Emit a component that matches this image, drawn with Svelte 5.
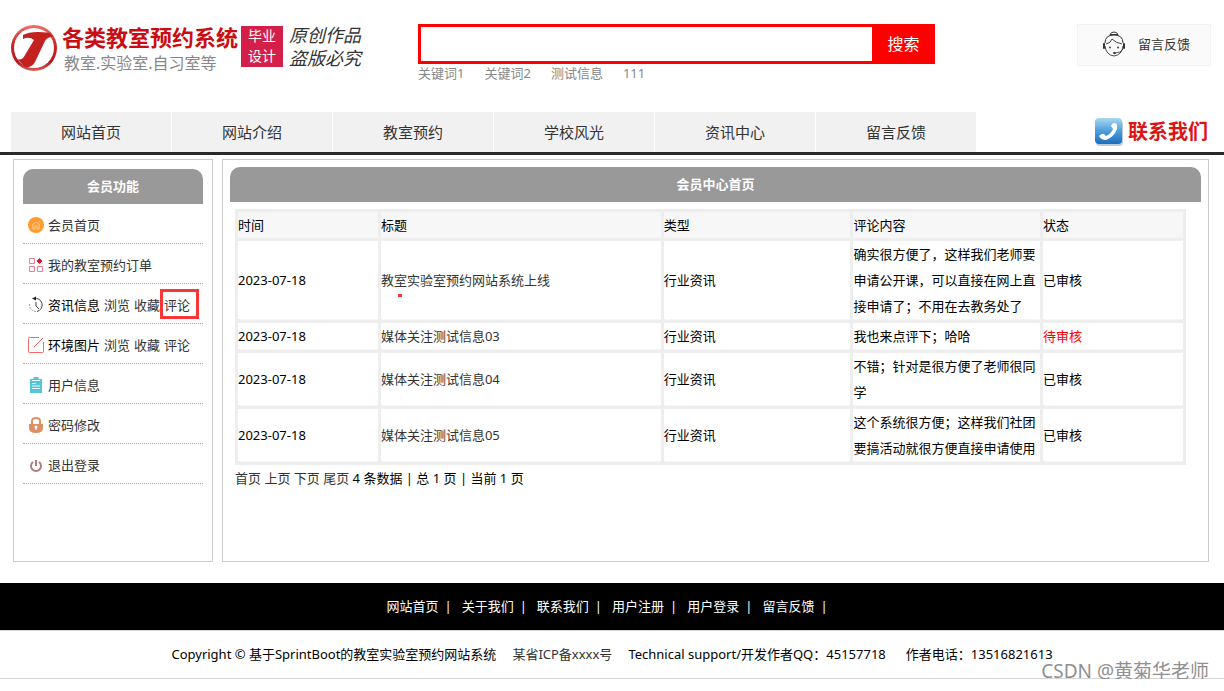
<script lang="ts">
	type Comment = { date: string; title: string; type: string; content: string; status: string; pending?: boolean };

	const keywords = ['关键词1', '关键词2', '测试信息', '111'];
	const navItems = ['网站首页', '网站介绍', '教室预约', '学校风光', '资讯中心', '留言反馈'];
	const footerLinks = ['网站首页', '关于我们', '联系我们', '用户注册', '用户登录', '留言反馈'];
	const subLinks = ['浏览', '收藏', '评论'];

	const menu = [
		{ icon: 'home', label: '会员首页' },
		{ icon: 'grid', label: '我的教室预约订单' },
		{ icon: 'clock', label: '资讯信息', links: subLinks, marked: '评论' },
		{ icon: 'edit', label: '环境图片', links: subLinks },
		{ icon: 'board', label: '用户信息' },
		{ icon: 'lock', label: '密码修改' },
		{ icon: 'power', label: '退出登录' }
	];

	const columns = ['时间', '标题', '类型', '评论内容', '状态'];
	const comments: Comment[] = [
		{
			date: '2023-07-18',
			title: '教室实验室预约网站系统上线',
			type: '行业资讯',
			content: '确实很方便了，这样我们老师要申请公开课，可以直接在网上直接申请了；不用在去教务处了',
			status: '已审核'
		},
		{ date: '2023-07-18', title: '媒体关注测试信息03', type: '行业资讯', content: '我也来点评下；哈哈', status: '待审核', pending: true },
		{ date: '2023-07-18', title: '媒体关注测试信息04', type: '行业资讯', content: '不错；针对是很方便了老师很同学', status: '已审核' },
		{
			date: '2023-07-18',
			title: '媒体关注测试信息05',
			type: '行业资讯',
			content: '这个系统很方便；这样我们社团要搞活动就很方便直接申请使用',
			status: '已审核'
		}
	];

	let query = $state('');
</script>

<div class="page" lang="zh-CN">
	<header class="header">
		<a class="logo" href="#home">
			<svg class="logo-mark" viewBox="0 0 48 48" aria-hidden="true">
				<defs>
					<linearGradient id="ring" x1="0" y1="0" x2="0" y2="1">
						<stop offset="0" stop-color="#ee7069" />
						<stop offset="0.4" stop-color="#c92a26" />
						<stop offset="0.8" stop-color="#b51618" />
						<stop offset="1" stop-color="#d9605c" />
					</linearGradient>
				</defs>
				<circle cx="24" cy="24" r="23" fill="url(#ring)" />
				<circle cx="24" cy="24" r="20" fill="#fff" />
				<path d="M13 11 Q22 6 40 9 L43 13 Q37 13 35 17 L25 38 Q22 44 15 43 L7 35 Q12 37 15 31 L24 16 Q19 12 13 15Z" fill="#c3211f" />
			</svg>
			<span class="logo-text">
				<strong>各类教室预约系统</strong>
				<span class="subtitle">教室.实验室.自习室等</span>
			</span>
			<span class="stamp">毕业<br />设计</span>
			<span class="slogan">
				<span>原创作品</span>
				<span>盗版必究</span>
			</span>
		</a>

		<div class="search">
			<form class="search-form" onsubmit={(e) => e.preventDefault()}>
				<input type="text" aria-label="搜索" bind:value={query} />
				<button type="submit">搜索</button>
			</form>
			<div class="keywords">
				{#each keywords as word}
					<a href="#search">{word}</a>
				{/each}
			</div>
		</div>

		<a class="feedback" href="#feedback">
			<svg viewBox="0 0 24 26" fill="none" stroke="#333" aria-hidden="true">
				<path d="M8 3.500 Q9 1 12 1 Q15 1 16 3.500 M8 3.500h8" />
				<path d="M3 12 Q3 4 12 4 Q21 4 21 12" />
				<path d="M3 15 Q4 24 12 25 Q20 24 21 15" stroke-width="0.900" />
				<path d="M4 13 Q9 12 10 8 Q14 12 20 13" stroke-width="0.900" />
				<path d="M2 13v4M22 13v4" stroke-width="2" stroke-linecap="round" />
				<path d="M21 18 Q19 22 13 22" stroke-width="0.800" />
				<circle cx="8" cy="16.500" r="0.900" fill="#333" stroke="none" />
				<circle cx="16" cy="16.500" r="0.900" fill="#333" stroke="none" />
				<ellipse cx="12.500" cy="22" rx="1.500" ry="0.900" fill="#333" stroke="none" />
			</svg>
			留言反馈
		</a>
	</header>

	<nav class="nav">
		{#each navItems as item}
			<a class="nav-item" href="#nav">{item}</a>
		{/each}
		<a class="contact" href="#contact">
			<svg viewBox="0 0 30 30" aria-hidden="true">
				<defs>
					<linearGradient id="phone" x1="0" y1="0" x2="0" y2="1">
						<stop offset="0" stop-color="#a9d8f2" />
						<stop offset="0.5" stop-color="#4d9edb" />
						<stop offset="1" stop-color="#1c6dbd" />
					</linearGradient>
				</defs>
				<rect x="2" y="3" width="27" height="26" rx="4" fill="#b9cbdd" />
				<rect x="1" y="1" width="27" height="26" rx="4" fill="url(#phone)" />
				<path d="M5 19 Q8 16 10 17 L12 19 Q17 17 19 12 L17 9 Q18 6 21 6 Q24 7 23 12 Q20 20 12 23 Q7 23 5 19Z" fill="#fff" />
			</svg>
			联系我们
		</a>
	</nav>

	<div class="body">
		<aside class="sidebar">
			<h2>会员功能</h2>
			<ul>
				{#each menu as item}
					<li>
						<svg class="icon" viewBox="0 0 16 16" fill="none" aria-hidden="true">
							{#if item.icon === 'home'}
								<circle cx="8" cy="8" r="8" fill="#ff9c2f" />
								<path d="M4 8l4-3 4 3M5 8v4h2v-3h2v3h2V8M11 4v2" stroke="#ffd09a" stroke-width="0.800" />
							{:else if item.icon === 'grid'}
								<path d="M1.500 1.500h5v5h-5zM1.500 9.500h5v5h-5zM9.500 9.500h5v5h-5z" stroke="#f07a8a" />
								<path d="M11.500 1.500l2.500 2.500-2.500 2.500-2.500-2.500z" fill="#e8132e" stroke="#e8132e" stroke-linejoin="round" />
							{:else if item.icon === 'clock'}
								<path d="M6 1.500 A6.500 6.500 0 0 1 9 14.500M8 5v4l3 3" stroke="#444" />
								<path d="M1.500 7 A7 7 0 0 0 9 14.500" stroke="#999" stroke-dasharray="2 1" />
								<path d="M4 1.500l4-2v4z" fill="#222" />
							{:else if item.icon === 'edit'}
								<path d="M11 0.500H1.500a1 1 0 0 0-1 1v13a1 1 0 0 0 1 1h13a1 1 0 0 0 1-1V5M6 10l9-9" stroke="#f4696b" />
							{:else if item.icon === 'board'}
								<path d="M2 2h3l1-2h4l1 2h3v14H2z" fill="#58c5d6" />
								<path d="M4 3.500h8M4 6.500h4M4 9h8M4 11.500h8" stroke="#e4f8fb" />
							{:else if item.icon === 'lock'}
								<path d="M4 8V4q0-3 4-3t4 3v4" stroke="#dc9063" stroke-width="2" />
								<path d="M1 7h14v4q0 5-7 5t-7-5z" fill="#dc9063" />
								<circle cx="8" cy="10" r="1.500" fill="#fff" />
								<path d="M8 10v3" stroke="#fff" />
							{:else}
								<path d="M5 5a5 5 0 1 0 6 0M8 3v6" stroke="#b27b7c" stroke-width="2" />
							{/if}
						</svg>
						{#if item.links}
							<span>{item.label}</span>
							{#each item.links as link}
								<a href="#member" class:marked={item.marked === link}>{link}</a>
							{/each}
						{:else}
							<a href="#member">{item.label}</a>
						{/if}
					</li>
				{/each}
			</ul>
		</aside>

		<main class="main">
			<h1>会员中心首页</h1>
			<div class="content">
				<table>
					<colgroup>
						<col class="narrow" />
						<col class="wide" />
						<col class="medium" />
						<col class="medium" />
						<col class="narrow" />
					</colgroup>
					<thead>
						<tr>
							{#each columns as column}
								<th scope="col">{column}</th>
							{/each}
						</tr>
					</thead>
					<tbody>
						{#each comments as row, i}
							<tr>
								<td>{row.date}</td>
								<td><a href="#news" class:dot={i === 0}>{row.title}</a></td>
								<td>{row.type}</td>
								<td>{row.content}</td>
								<td class:pending={row.pending}>{row.status}</td>
							</tr>
						{/each}
					</tbody>
				</table>
				<div class="pager">
					<a href="#first">首页</a> <a href="#prev">上页</a> <a href="#next">下页</a> <a href="#last">尾页</a>
					4 条数据 | 总 1 页 | 当前 1 页
				</div>
			</div>
		</main>
	</div>

	<footer>
		<div class="footer-nav">
			{#each footerLinks as link}
				<span><a href="#footer">{link}</a>|</span>
			{/each}
		</div>
		<div class="copyright">
			<span>Copyright © 基于SprintBoot的教室实验室预约网站系统</span>
			<a href="#icp">某省ICP备xxxx号</a>
			<span>Technical support/开发作者QQ：45157718</span>
			<span class="phone">作者电话：13516821613</span>
		</div>
		<div class="watermark">CSDN @黄菊华老师</div>
	</footer>
</div>

<style>
	:global(body) {
		margin: 0;
		background: #fff;
	}
	.page {
		font-family: 'Noto Sans', 'Noto Sans CJK SC', sans-serif;
		font-size: 13px;
		line-height: 26px;
		color: #000;
	}
	a {
		color: #333;
		text-decoration: none;
	}
	.header {
		display: flex;
		align-items: flex-start;
		height: 88px;
		padding: 24px 13px 0 10px;
	}
	.logo {
		display: flex;
		flex: none;
		width: 408px;
	}
	.logo-mark {
		width: 48px;
		height: 48px;
	}
	.logo-text {
		display: flex;
		flex-direction: column;
		margin: 0 3px 0 4px;
		font-size: 16px;
		color: #888;
	}
	.logo-text strong {
		font-size: 22px;
		color: #c90d12;
	}
	.subtitle {
		padding-left: 2px;
	}
	.stamp {
		box-sizing: border-box;
		width: 42px;
		height: 41px;
		margin-top: 2px;
		font-size: 14px;
		line-height: 20px;
		text-align: center;
		color: #fff;
		background: #d41f48;
	}
	.slogan {
		display: flex;
		flex-direction: column;
		margin-left: 6px;
		font-size: 18px;
		font-style: italic;
		line-height: 23px;
		color: #333;
	}
	.search {
		flex: 0 1 517px;
	}
	.search-form {
		display: flex;
		height: 40px;
	}
	.search-form input {
		flex: 1;
		min-width: 0;
		padding: 0 8px;
		font: inherit;
		border: 3px solid #f00;
		border-right: 0;
		outline: none;
	}
	.search-form button {
		width: 63px;
		padding: 0;
		font: inherit;
		font-size: 16px;
		color: #fff;
		background: #f00;
		border: 0;
	}
	.keywords {
		display: flex;
		gap: 20px;
		line-height: 18px;
	}
	.keywords a {
		color: #888;
	}
	.feedback {
		display: flex;
		align-items: center;
		gap: 12px;
		box-sizing: border-box;
		width: 134px;
		height: 42px;
		margin-left: auto;
		padding: 0 0 2px 24px;
		background: #fafafa;
		border: 1px solid #f2f2f2;
	}
	.feedback svg {
		width: 24px;
		height: 26px;
	}
	.nav {
		display: flex;
		padding: 0 16px 0 11px;
		border-bottom: 3px solid #29292b;
	}
	.nav-item {
		width: 160px;
		margin-right: 1px;
		font-size: 15px;
		line-height: 40px;
		text-align: center;
		background: #f1f1f1;
	}
	.contact {
		display: flex;
		align-items: center;
		gap: 4px;
		margin-left: auto;
		font-size: 20px;
		font-weight: bold;
		color: #dc1414;
	}
	.contact svg {
		width: 30px;
		height: 30px;
	}
	.body {
		display: flex;
		gap: 9px;
		min-height: 403px;
		padding: 4px 15px 21px 13px;
	}
	.sidebar,
	.main {
		box-sizing: border-box;
		border: 1px solid #ccc;
	}
	.sidebar {
		flex: none;
		width: 200px;
		padding: 9px;
	}
	.main {
		flex: 1;
		min-width: 0;
		padding: 7px;
	}
	h1,
	h2 {
		margin: 0;
		font-size: 13px;
		line-height: 35px;
		text-align: center;
		color: #fff;
		background: #999;
		border-radius: 10px 10px 0 0;
	}
	ul {
		margin: 0;
		padding: 0;
		list-style: none;
	}
	li {
		display: flex;
		align-items: center;
		gap: 4px;
		box-sizing: border-box;
		height: 40px;
		padding: 3px 0 0 5px;
		white-space: nowrap;
		border-bottom: 1px dotted #aaa;
	}
	.icon {
		flex: none;
		width: 16px;
		height: 16px;
		overflow: visible;
	}
	.marked,
	.dot {
		position: relative;
	}
	/* hand-drawn style highlights laid over the links */
	.marked::after {
		content: '';
		position: absolute;
		inset: -3px -9px -1px -4px;
		border: 3px solid #f93737;
	}
	.dot::after {
		content: '';
		position: absolute;
		left: 17px;
		bottom: -8px;
		width: 4px;
		height: 3px;
		background: #f93737;
	}
	.content {
		padding: 7px 15px 0 5px;
	}
	table {
		width: 100%;
		table-layout: fixed;
		border-spacing: 3px;
		background: #eee;
	}
	.narrow {
		width: 15%;
	}
	.wide {
		width: 30%;
	}
	.medium {
		width: 20%;
	}
	th,
	td {
		padding: 0;
		text-align: left;
		background: #fff;
	}
	th {
		font-weight: normal;
		background: #f7f7f7;
	}
	td {
		border-bottom: 1px dotted #eee;
	}
	.pending {
		color: #f00;
	}
	footer {
		position: relative;
		border-bottom: 1px solid #d6d6d6;
	}
	.footer-nav {
		display: flex;
		justify-content: center;
		gap: 10px;
		padding-right: 10px;
		line-height: 47px;
		color: #fff;
		background: #000;
		border-bottom: 1px solid #d6d6d6;
	}
	.footer-nav a {
		margin-right: 6px;
		color: #fff;
	}
	.copyright {
		display: flex;
		justify-content: center;
		gap: 16px;
		line-height: 47px;
	}
	.phone {
		margin-left: 4px;
	}
	.watermark {
		position: absolute;
		right: 15px;
		bottom: -6px;
		font-size: 19px;
		color: #909090;
	}
</style>
